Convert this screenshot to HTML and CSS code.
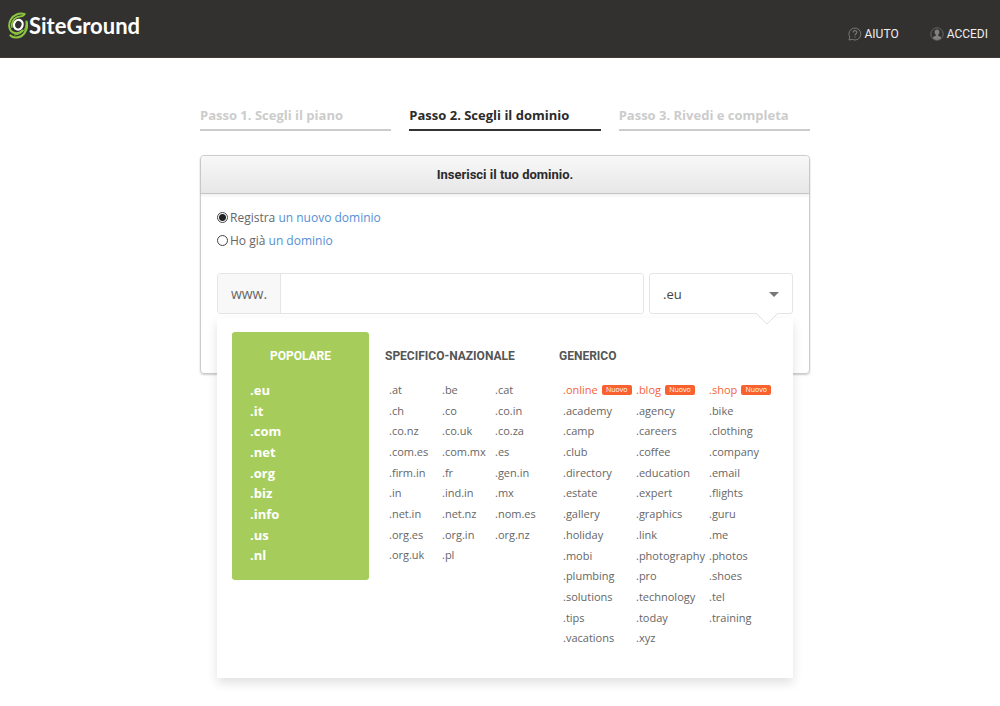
FILE: index.html
```html
<!DOCTYPE html>
<html lang="it">
<head>
<meta charset="utf-8">
<title>SiteGround - Scegli il dominio</title>
<link rel="stylesheet" href="styles.css">
</head>
<body>
<header class="topbar">
  <a class="logo" href="#">
    <svg class="logo-mark" viewBox="0 0 20 28" width="20" height="28" aria-hidden="true" fill="none" stroke-linecap="round">
      <path d="M16.500 2C11 .5 5.500 3 2.800 7.500C0 12.500 1 18.500 5 20.500C8 22 12 21 14.500 18.500" stroke="#8cc63f" stroke-width="2"/>
      <path d="M16.500 2.200C15.500 5 12 3.800 8.500 5.500C5 7.500 3.500 11 3.800 15" stroke="#8cc63f" stroke-width="1.800"/>
      <path d="M18.500 9.500C20 15 18 21 13.500 24C10 26.200 5 26 2.500 23.500" stroke="#8cc63f" stroke-width="2.200"/>
      <path d="M18.200 11C18.500 17 14 22.500 6.500 23" stroke="#8cc63f" stroke-width="1"/>
      <ellipse cx="10.300" cy="12.700" rx="4.300" ry="4.900" transform="rotate(20 10.300 12.700)" fill="#333130" stroke="#fff" stroke-width="2.200"/>
    </svg>
    <span class="logo-name">SiteGround</span>
  </a>
  <nav class="topnav">
    <a href="#">
      <svg viewBox="0 0 14 14" width="14" height="14" aria-hidden="true" fill="none" stroke="#777">
        <path d="M1 13l.8-2.800A6 6 0 1 1 4.200 12.400Z"/>
        <path d="M5.200 5.400C5.200 3 9 3.200 8.800 5.500C8.700 6.700 7 6.700 7 8.200M7 9.400v1.200" stroke-width="1.200"/>
      </svg>AIUTO</a>
    <a href="#">
      <svg viewBox="0 0 14 14" width="14" height="14" aria-hidden="true">
        <circle cx="7" cy="7" r="6.200" fill="none" stroke="#666"/>
        <path d="M7 2.500c-1.800 0-2.500 1.200-2.400 2.800.1 1.300.6 2 1.200 2.500v.9L3 10v1.300c2 2.200 6 2.200 8 0V10L8.200 8.700v-.9c.6-.5 1.100-1.200 1.200-2.500C9.500 3.700 8.800 2.500 7 2.500Z" fill="#808080"/>
      </svg>ACCEDI</a>
  </nav>
</header>

<main class="page">
  <ol class="steps">
    <li>Passo 1. Scegli il piano</li>
    <li class="current" aria-current="step">Passo 2. Scegli il dominio</li>
    <li>Passo 3. Rivedi e completa</li>
  </ol>

  <form class="card">
    <h1>Inserisci il tuo dominio.</h1>
    <div class="card-body">
      <label class="choice"><input type="radio" name="mode" checked><span>Registra <a href="#">un nuovo dominio</a></span></label>
      <label class="choice"><input type="radio" name="mode"><span>Ho già <a href="#">un dominio</a></span></label>

      <div class="domain">
        <div class="name-field">
          <label for="name">www.</label>
          <input id="name" type="text">
        </div>
        <div class="tld-field">
          <select aria-label="Estensione"><option>.eu</option></select>
          <svg class="arrow" viewBox="0 0 10 5" width="10" height="5" aria-hidden="true"><path d="M0 0H10L5 5Z" fill="#777"/></svg>
        </div>
        <svg class="pointer" viewBox="0 0 22 12" width="22" height="12" aria-hidden="true"><path d="M0 0L11 11L22 0" fill="#fff" stroke="#e2e2e2"/></svg>

        <div class="panel">
          <section class="popular">
            <h2>POPOLARE</h2>
            <ul class="tlds">
              <li>.eu</li><li>.it</li><li>.com</li><li>.net</li><li>.org</li><li>.biz</li><li>.info</li><li>.us</li><li>.nl</li>
            </ul>
          </section>
          <section class="national">
            <h2>SPECIFICO-NAZIONALE</h2>
            <ul class="tlds">
              <li>.at</li><li>.be</li><li>.cat</li>
              <li>.ch</li><li>.co</li><li>.co.in</li>
              <li>.co.nz</li><li>.co.uk</li><li>.co.za</li>
              <li>.com.es</li><li>.com.mx</li><li>.es</li>
              <li>.firm.in</li><li>.fr</li><li>.gen.in</li>
              <li>.in</li><li>.ind.in</li><li>.mx</li>
              <li>.net.in</li><li>.net.nz</li><li>.nom.es</li>
              <li>.org.es</li><li>.org.in</li><li>.org.nz</li>
              <li>.org.uk</li><li>.pl</li>
            </ul>
          </section>
          <section class="generic">
            <h2>GENERICO</h2>
            <ul class="tlds">
              <li class="new">.online<span class="badge">Nuovo</span></li><li class="new">.blog<span class="badge">Nuovo</span></li><li class="new">.shop<span class="badge">Nuovo</span></li>
              <li>.academy</li><li>.agency</li><li>.bike</li>
              <li>.camp</li><li>.careers</li><li>.clothing</li>
              <li>.club</li><li>.coffee</li><li>.company</li>
              <li>.directory</li><li>.education</li><li>.email</li>
              <li>.estate</li><li>.expert</li><li>.flights</li>
              <li>.gallery</li><li>.graphics</li><li>.guru</li>
              <li>.holiday</li><li>.link</li><li>.me</li>
              <li>.mobi</li><li>.photography</li><li>.photos</li>
              <li>.plumbing</li><li>.pro</li><li>.shoes</li>
              <li>.solutions</li><li>.technology</li><li>.tel</li>
              <li>.tips</li><li>.today</li><li>.training</li>
              <li>.vacations</li><li>.xyz</li>
            </ul>
          </section>
        </div>
      </div>
    </div>
  </form>
</main>
</body>
</html>
```
FILE: styles.css
```css
* { box-sizing: border-box; }
body {
  min-height: 100vh;
  margin: 0;
  background: #fff;
  color: #666;
  font: 12px/20px "Open Sans", sans-serif;
}
a { color: #5590d3; text-decoration: none; }
h1, h2, ul, ol { margin: 0; padding: 0; list-style: none; }

.topbar {
  display: flex;
  justify-content: space-between;
  height: 58px;
  padding: 0 12px 0 8px;
  background: #333130;
  border-bottom: 1px solid #403b39;
}
.logo { display: flex; align-items: center; gap: 1px; height: 52px; color: #fff; }
.logo-name { font: 700 22px/32px Lato, sans-serif; }
.topnav { display: flex; gap: 31px; padding-top: 24px; }
.topnav a {
  display: flex;
  align-items: center;
  gap: 3px;
  height: 20px;
  color: #eee;
  font: 12px/20px Roboto, sans-serif;
}

.page { max-width: 620px; margin: 0 auto; padding: 47px 0 0 10px; }
.steps { display: grid; grid-template-columns: repeat(3, 1fr); gap: 18px; }
.steps li {
  padding-bottom: 4px;
  border-bottom: 2px solid #ccc;
  color: #ccc;
  font-weight: 700;
  font-size: 13px;
}
.steps .current { color: #2b2b2b; border-color: #333; }

.card {
  margin-top: 24px;
  min-height: 219px;
  border: 1px solid #ccc;
  border-radius: 4px;
  box-shadow: 0 1px 2px rgba(0, 0, 0, .2);
}
.card h1 {
  padding: 9px 0 8px;
  border-bottom: 1px solid #c4c4c4;
  border-radius: 4px 4px 0 0;
  background: linear-gradient(#f8f8f8, #e7e7e7);
  box-shadow: 0 2px 3px rgba(0, 0, 0, .06);
  color: #2b2b2b;
  font: 700 13px/20px Roboto, sans-serif;
  text-align: center;
}
.card-body { padding: 12px 16px; }
.choice { display: flex; align-items: center; gap: 2px; height: 23px; }
.choice input {
  appearance: none;
  width: 11px;
  height: 11px;
  margin: 0;
  border: 1px solid #444;
  border-radius: 50%;
}
.choice input:checked { background: radial-gradient(circle, #222 0 3px, #fff 4px); }

.domain { position: relative; display: flex; gap: 5px; margin-top: 21px; }
.name-field {
  display: flex;
  flex: 1;
  height: 41px;
  border: 1px solid #e5e5e5;
  border-radius: 3px;
  overflow: hidden;
}
.name-field label {
  width: 63px;
  border-right: 1px solid #e5e5e5;
  background: #f8f8f8;
  font-size: 14px;
  line-height: 39px;
  text-align: center;
}
.name-field input { flex: 1; min-width: 0; border: 0; background: #fff; font: inherit; }
.tld-field { position: relative; width: 144px; }
.tld-field select {
  width: 100%;
  height: 41px;
  padding: 0 13px;
  appearance: none;
  border: 1px solid #e5e5e5;
  border-radius: 3px;
  background: #fff;
  color: #444;
  font: 13px/20px "Open Sans", sans-serif;
}
.arrow { position: absolute; right: 14px; top: 19px; }
.pointer { position: absolute; z-index: 2; right: 15px; top: 40px; }

.panel {
  position: absolute;
  z-index: 1;
  top: 45px;
  left: 0;
  width: 100%;
  display: flex;
  align-items: flex-start;
  padding: 14px 0 29px 15px;
  background: #fff;
  box-shadow: 0 5px 10px rgba(0, 0, 0, .12);
}
.panel h2 {
  padding-top: 14px;
  color: #555;
  font: 700 12px/20px Roboto, sans-serif;
}
.tlds { display: grid; grid-auto-rows: 1fr; margin-top: 14px; white-space: nowrap; }
.popular { width: 137px; height: 248px; border-radius: 3px; background: #a6cd5c; color: #fff; }
.popular h2 { color: #fff; text-align: center; }
.popular .tlds { height: 186px; padding-left: 18px; font-weight: 700; }
.national { width: 190px; padding-left: 16px; }
.national .tlds { height: 186px; padding-left: 4px; grid-template-columns: repeat(3, 53px); }
.generic { flex: 1; }
.generic .tlds { height: 269px; padding-left: 4px; grid-template-columns: repeat(3, 73px); }
.tlds li { font-size: 11px; }
.popular .tlds li { font-size: 13px; }
.new { display: flex; align-items: center; gap: 4px; color: #f4633a; }
.badge {
  width: 30px;
  border-radius: 2px;
  background: #f9612e;
  color: #fff;
  font-size: 7px;
  line-height: 10px;
  text-align: center;
}
```
